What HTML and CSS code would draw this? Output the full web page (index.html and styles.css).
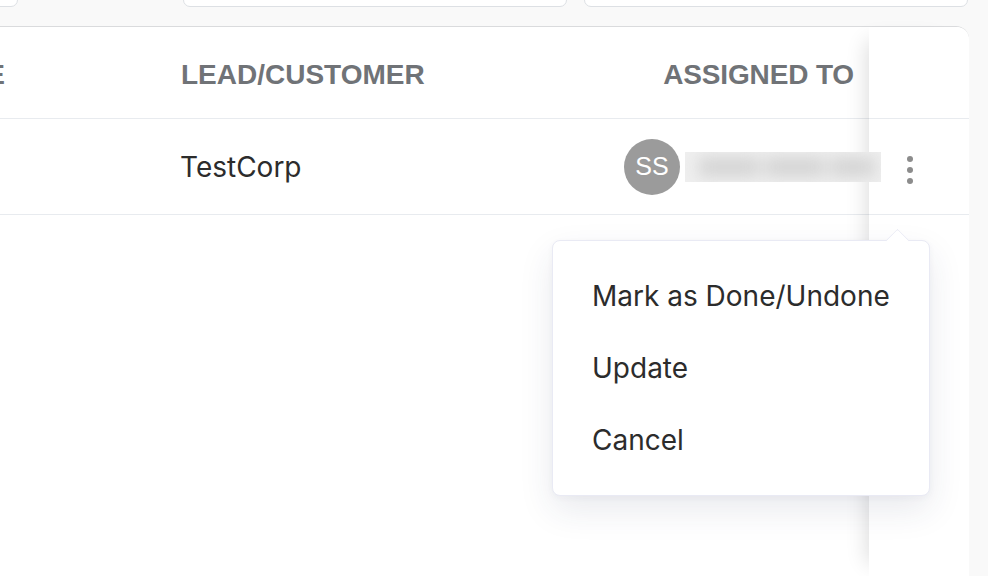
FILE: index.html
```html
<!DOCTYPE html>
<html lang="en">
<head>
<meta charset="utf-8">
<title>Tasks</title>
<link rel="stylesheet" href="styles.css">
</head>
<body>
  <div class="toolbar">
    <div class="field field-first"></div>
    <div class="field field-second"></div>
    <div class="field"></div>
  </div>
  <div class="card">
    <div class="scroll">
      <div class="row head">
        <div class="cell c1">DUE DATE</div>
        <div class="cell c2">LEAD/CUSTOMER</div>
        <div class="cell c3">ASSIGNED TO</div>
      </div>
      <div class="row body">
        <div class="cell c1"></div>
        <div class="cell c2">TestCorp</div>
        <div class="cell c3b">
          <span class="avatar">SS</span>
          <span class="redact"><span class="redact-blur"><i></i><i></i><i></i></span></span>
        </div>
      </div>
    </div>
    <div class="actions">
      <div class="act-head"></div>
      <div class="act-body">
        <button class="kebab" aria-label="More actions"><span></span><span></span><span></span></button>
      </div>
      <div class="menu">
        <div class="menu-item">Mark as Done/Undone</div>
        <div class="menu-item">Update</div>
        <div class="menu-item">Cancel</div>
      </div>
    </div>
  </div>
</body>
</html>
```
FILE: styles.css
```css
* { box-sizing: border-box; }
html, body { margin: 0; padding: 0; }
html { overflow: hidden; }
body {
  background: #f9f9f9;
  font-family: Inter, "Noto Sans", sans-serif;
  width: 988px;
  height: 576px;
  overflow: hidden;
}
.toolbar {
  display: flex;
  margin-top: -29px;
  margin-left: -200px;
  height: 36px;
}
.field {
  width: 384px;
  height: 36px;
  background: #fff;
  border: 1.5px solid #dde0e4;
  border-radius: 7px;
}
.field-first { width: 218px; }
.field-second { margin-left: 165px; margin-right: 17px; }
.card {
  display: flex;
  margin-top: 19px;
  margin-left: -200px;
  width: 1169px;
  height: 551px;
  background: #fff;
  border: 1px solid #dadbdd;
  border-bottom: 0;
  border-top-right-radius: 13px;
  position: relative;
}
.scroll {
  width: 1068px;
  flex: none;
}
.row {
  display: grid;
  grid-template-columns: 204px 620px 244px;
  border-bottom: 1.5px solid #e8ebef;
  align-items: center;
}
.head { height: 92px; padding-top: 4px; }
.body { height: 96px; }
.cell.c1 { text-align: right; }
.head .cell {
  font-family: "Liberation Sans", Arial, sans-serif;
  font-weight: 700;
  font-size: 28px;
  color: #707377;
}
.head .c2 { padding-left: 176px; }
.head .c3 { text-align: right; padding-right: 15px; letter-spacing: -0.15px; }
.body .c2 {
  padding-left: 175px;
  font-size: 28px;
  color: #2c2c2c;
}
.c3b {
  display: flex;
  align-items: center;
}
.avatar {
  width: 56px;
  height: 56px;
  border-radius: 50%;
  background: #9b9b9b;
  color: #fff;
  font-family: "Liberation Sans", Arial, sans-serif;
  font-size: 25px;
  display: flex;
  align-items: center;
  justify-content: center;
  flex: none;
  margin-left: -1px;
}
.redact {
  position: relative;
  z-index: 3;
  margin-left: 5px;
  width: 196px;
  height: 30px;
  flex: none;
  background: #efefef;
  overflow: hidden;
  display: flex;
  align-items: center;
}
.redact-blur {
  display: flex;
  gap: 6px;
  padding-left: 14px;
  filter: blur(8px);
}
.redact-blur i {
  display: block;
  width: 60px;
  height: 18px;
  background: #d2d2d2;
}
.redact-blur i:nth-child(3) { width: 44px; }
.actions {
  position: relative;
  z-index: 1;
  width: 100px;
  flex: none;
  background: #fff;
  border-top-right-radius: 12px;
  box-shadow: -16px 0 20px -14px rgba(0,0,0,0.14);
}
.act-head {
  height: 92px;
  border-bottom: 1.5px solid #e8ebef;
}
.act-body {
  height: 96px;
  border-bottom: 1.5px solid #e8ebef;
  display: flex;
  align-items: center;
  padding-left: 38px;
}
.kebab {
  border: 0;
  background: none;
  padding: 0;
  margin-top: 7px;
  display: flex;
  flex-direction: column;
  gap: 5px;
}
.kebab span {
  display: block;
  width: 6px;
  height: 6px;
  border-radius: 50%;
  background: #8c8c8c;
}
.menu {
  position: absolute;
  top: 213px;
  right: 39px;
  width: 378px;
  height: 256px;
  background: #fff;
  border: 1.5px solid #e9eaf4;
  border-radius: 8px;
  box-shadow: 0 14px 34px rgba(40, 45, 90, 0.1), 0 2px 6px rgba(40,45,90,0.04);
  padding: 19px 0 20px 39px;
  z-index: 5;
}
.menu::before {
  content: "";
  position: absolute;
  top: -9px;
  right: 23px;
  width: 16px;
  height: 16px;
  background: #fff;
  border-top: 1.5px solid #e9eaf4;
  border-left: 1.5px solid #e9eaf4;
  transform: rotate(45deg);
  border-top-left-radius: 2px;
}
.menu-item {
  height: 72px;
  display: flex;
  align-items: center;
  font-size: 28px;
  color: #2c2c2c;
}
```
